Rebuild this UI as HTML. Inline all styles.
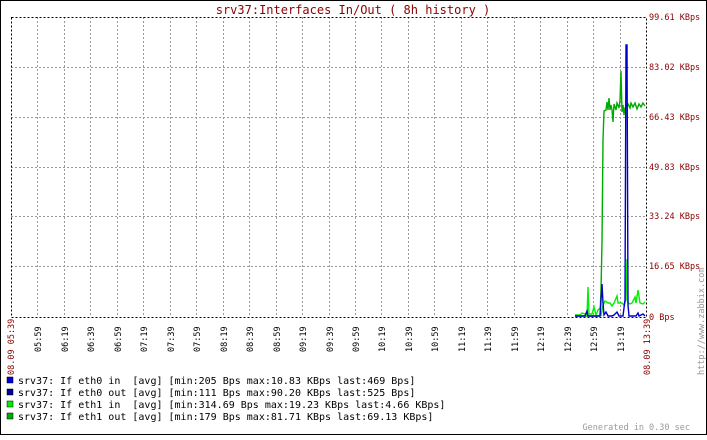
<!DOCTYPE html><html><head><style>
body{margin:0;background:#fff}
svg text{font-family:"DejaVu Sans Mono","Liberation Mono",monospace;white-space:pre}
</style></head><body>
<svg width="707" height="435" xmlns="http://www.w3.org/2000/svg" xml:space="preserve">
<rect x="0.5" y="0.5" width="706" height="434" fill="#fff" stroke="#000"/>
<text x="353" y="14" text-anchor="middle" fill="#8b0000" font-size="12">srv37:Interfaces In/Out ( 8h history )</text>
<g stroke="#999" stroke-dasharray="2,2" stroke-width="1">
<path d="M11 67.5H646M11 117.5H646M11 167.5H646M11 216.5H646M11 266.5H646"/>
<path d="M37.5 17V317M64.5 17V317M90.5 17V317M117.5 17V317M143.5 17V317M170.5 17V317M196.5 17V317M223.5 17V317M249.5 17V317M276.5 17V317M302.5 17V317M329.5 17V317M355.5 17V317M381.5 17V317M408.5 17V317M434.5 17V317M461.5 17V317M487.5 17V317M514.5 17V317M540.5 17V317M567.5 17V317M593.5 17V317M620.5 17V317"/>
</g>
<g stroke="#000" stroke-dasharray="2,2" fill="none"><rect x="11.5" y="17.5" width="635" height="300"/></g>
<g fill="#8b0000" font-size="8.5">
<text x="649" y="20">99.61 KBps</text><text x="649" y="70">83.02 KBps</text><text x="649" y="120">66.43 KBps</text><text x="649" y="170">49.83 KBps</text><text x="649" y="219">33.24 KBps</text><text x="649" y="269">16.65 KBps</text><text x="649" y="320">0 Bps</text>
</g>
<g font-size="8.5" fill="#000">
<text transform="translate(14,375) rotate(-90)" fill="#8b0000">08.09 05:39</text>
<text transform="translate(41,352) rotate(-90)">05:59</text><text transform="translate(68,352) rotate(-90)">06:19</text><text transform="translate(94,352) rotate(-90)">06:39</text><text transform="translate(121,352) rotate(-90)">06:59</text><text transform="translate(147,352) rotate(-90)">07:19</text><text transform="translate(174,352) rotate(-90)">07:39</text><text transform="translate(200,352) rotate(-90)">07:59</text><text transform="translate(227,352) rotate(-90)">08:19</text><text transform="translate(253,352) rotate(-90)">08:39</text><text transform="translate(280,352) rotate(-90)">08:59</text><text transform="translate(306,352) rotate(-90)">09:19</text><text transform="translate(333,352) rotate(-90)">09:39</text><text transform="translate(359,352) rotate(-90)">09:59</text><text transform="translate(385,352) rotate(-90)">10:19</text><text transform="translate(412,352) rotate(-90)">10:39</text><text transform="translate(438,352) rotate(-90)">10:59</text><text transform="translate(465,352) rotate(-90)">11:19</text><text transform="translate(491,352) rotate(-90)">11:39</text><text transform="translate(518,352) rotate(-90)">11:59</text><text transform="translate(544,352) rotate(-90)">12:19</text><text transform="translate(571,352) rotate(-90)">12:39</text><text transform="translate(597,352) rotate(-90)">12:59</text><text transform="translate(624,352) rotate(-90)">13:19</text>
<text transform="translate(650,375) rotate(-90)" fill="#8b0000">08.09 13:39</text>
<text transform="translate(704,375) rotate(-90)" fill="#999">http://www.zabbix.com</text>
</g>
<polyline fill="none" stroke="#00aa00" stroke-width="1.4" points="575,316 600,316 601,290 602,243 603,140 604,111 606,110 607,102 608,110 609,98 610,110 611,105 612,110 613,122 614,104 616,110 617,103 619,108 620,100 621,71 622,112 623,105 624,115 625,108 628,104 630,108 631,103 633,107 635,103 637,109 639,104 641,107 643,103 645,106"/>
<polyline fill="none" stroke="#00ee00" stroke-width="1.4" points="575,315 580,315 582,313 585,314 587,316 588,287 589,314 592,314 594,307 596,315 598,310 600,308 601,316 603,305 605,301 608,303 610,303 612,306 614,303 617,296 618,303 620,303 622,303 624,305 626,300 627,259 628,303 630,304 632,303 635,297 636,303 638,290 640,303 643,304 645,302"/>
<polyline fill="none" stroke="#0000cc" stroke-width="1.4" points="575,316 585,316 587,311 588,316 600,316 602,284 603,303 604,315 606,312 608,316 612,316 614,315 617,312 619,316 623,316 625,300 626,45 627,45 628,305 629,316 636,316 638,313 639,316 643,314 645,316"/>
<g font-size="10" fill="#000">
<rect x="7" y="377" width="6" height="6" fill="#0000dd" stroke="#000" stroke-width=".5"/><text x="18" y="384">srv37: If eth0 in  [avg] [min:205 Bps max:10.83 KBps last:469 Bps]</text>
<rect x="7" y="389" width="6" height="6" fill="#000099" stroke="#000" stroke-width=".5"/><text x="18" y="396">srv37: If eth0 out [avg] [min:111 Bps max:90.20 KBps last:525 Bps]</text>
<rect x="7" y="401" width="6" height="6" fill="#00ee00" stroke="#000" stroke-width=".5"/><text x="18" y="408">srv37: If eth1 in  [avg] [min:314.69 Bps max:19.23 KBps last:4.66 KBps]</text>
<rect x="7" y="413" width="6" height="6" fill="#00aa00" stroke="#000" stroke-width=".5"/><text x="18" y="420">srv37: If eth1 out [avg] [min:179 Bps max:81.71 KBps last:69.13 KBps]</text>
</g>
<text x="690" y="430" text-anchor="end" font-size="8.5" fill="#999">Generated in 0.30 sec</text>
</svg>
</body></html>
